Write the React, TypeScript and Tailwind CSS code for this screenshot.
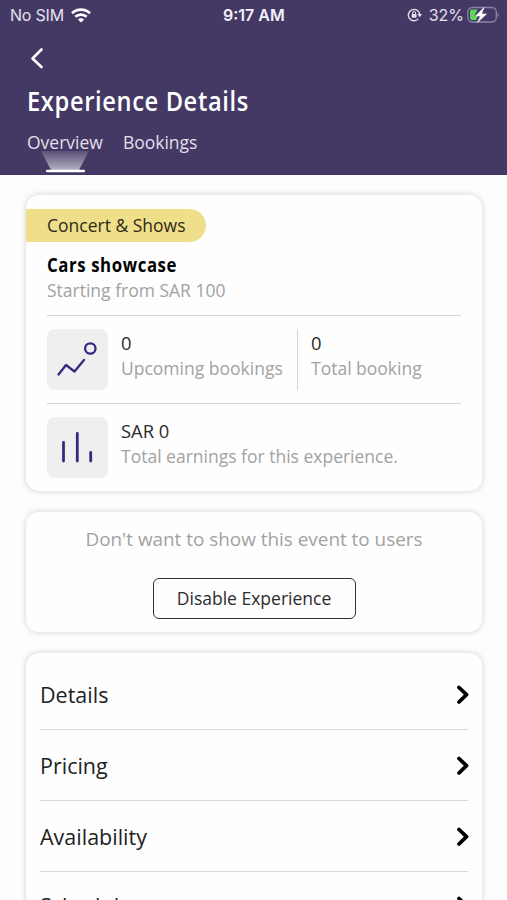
import { useState } from "react"

const sections = ["Details", "Pricing", "Availability", "Schedule"]

function StatusBar() {
  return (
    <div className="flex h-[30px] items-center pl-[10px] pr-[8px] font-['Inter',sans-serif] text-[16px] leading-[30px] text-[#e4e0ee]">
      <div className="flex w-[213px] items-center">
        <span className="tracking-[-0.2px]">No SIM</span>
        <svg className="ml-[7px]" width="20" height="15" viewBox="0 0 20 15" fill="none" stroke="white" strokeWidth="2.7">
          <path d="M1 5.2C6 .4 14 .4 19 5.2" />
          <path d="M4.3 8.8C7.5 5.8 12.5 5.8 15.7 8.8" />
          <path d="M10 14.6l-3.1-3.1c1.6-1.6 4.6-1.6 6.2 0z" fill="white" stroke="none" />
        </svg>
      </div>
      <span className="font-semibold text-[#f3f1f8]">9:17 AM</span>
      <div className="ml-auto flex items-center">
        <svg width="15" height="14" viewBox="0 0 15 14" fill="none">
          <path d="M12.7 6.2A5.7 5.7 0 1 0 11.3 10.9" stroke="#e4e0ee" strokeWidth="1.4" />
          <path d="M10.4 6H15l-2.3 3.2z" fill="#e4e0ee" />
          <path d="M5.6 6.4V5a1.5 1.5 0 0 1 3 0v1.4" stroke="#e4e0ee" />
          <rect x="4.7" y="6" width="4.8" height="3.8" rx=".6" fill="#e4e0ee" />
        </svg>
        <span className="ml-[7px]">32%</span>
        <svg className="ml-[3px]" width="32" height="18" viewBox="0 0 32 18">
          <rect x=".8" y="1.5" width="28.5" height="14.5" rx="4.5" fill="none" stroke="#8b82a3" strokeWidth="1.3" />
          <path d="M30.6 6.5c1.6.8 1.6 4.2 0 5z" fill="#8b82a3" />
          <path d="M5 3.6h5.5L7.5 10h3l-1.2 4H5a2 2 0 0 1-2-2V5.6a2 2 0 0 1 2-2z" fill="#5fd35f" />
          <path d="M17 1.5L8.500 10h5l-3 6.500L19.500 8h-5z" fill="white" stroke="white" strokeWidth=".6" />
        </svg>
      </div>
    </div>
  )
}

function TrendIcon() {
  return (
    <svg width="61" height="61" viewBox="0 0 61 61" fill="none" stroke="#3c2780" strokeWidth="2.3" strokeLinecap="round" strokeLinejoin="round">
      <path d="M11.5 45.5L19 36l8.5 6.5L37 31" />
      <circle cx="43.3" cy="19.5" r="5.2" />
    </svg>
  )
}

function BarsIcon() {
  return (
    <svg width="61" height="61" viewBox="0 0 61 61" stroke="#3c2780" strokeWidth="2.8" strokeLinecap="round">
      <path d="M16.5 25.5V44M30.3 16.5V44M43.7 35.5V44" />
    </svg>
  )
}

function Stat({ value, label }: { value: string; label: string }) {
  return (
    <div className="whitespace-nowrap">
      <p className="text-[18.4px] leading-[27px] text-[#2b2b2b]">{value}</p>
      <p className="text-[17.5px] leading-[25px] text-[#a2a2a2]">{label}</p>
    </div>
  )
}

export default function App() {
  const [tab, setTab] = useState("Overview")

  return (
    <div className="h-[900px] overflow-hidden bg-[#fdfdfd] font-['Open_Sans',sans-serif]">
      <header className="h-[175px] bg-[#443964]">
        <StatusBar />
        <button className="ml-[30px] mt-[17px] block h-[22px]">
          <svg width="14" height="22" viewBox="0 0 14 22" fill="none" stroke="white" strokeWidth="2.6" strokeLinecap="round" strokeLinejoin="round">
            <path d="M11.5 2.5l-9 9 9 8.5" />
          </svg>
        </button>
        <h1 className="ml-[27px] mt-[14px] w-max origin-left scale-x-[0.86] text-[27.5px] font-semibold leading-[36px] tracking-[0.75px] text-white">Experience Details</h1>
        <nav className="ml-[27px] mt-[10px] flex gap-[20px] text-[17.5px] leading-[26px]">
          {["Overview", "Bookings"].map((name) => (
            <button key={name} onClick={() => setTab(name)} className="relative text-[#e2dfea]">
              {name}
              {tab === name && (
                <svg className="absolute left-[14px] top-[22px]" width="48" height="22" viewBox="0 0 48 22">
                  <defs>
                    <linearGradient id="beam" x1="0" y1="0" x2="0" y2="1">
                      <stop offset="0" stopColor="white" stopOpacity="0.12" />
                      <stop offset="1" stopColor="white" stopOpacity="0.6" />
                    </linearGradient>
                  </defs>
                  <path d="M0 0h48L38 19H10z" fill="url(#beam)" />
                  <rect x="5" y="18.7" width="39" height="2.6" rx="1" fill="white" />
                </svg>
              )}
            </button>
          ))}
        </nav>
      </header>

      <main className="flex flex-col gap-[20px] pl-[26px] pr-[25px] pt-[20px]">
        <section className="h-[296px] rounded-[13px] bg-[#fefefe] pt-[14px] shadow-[0_0_6px_rgba(0,0,0,0.18)]">
          <div className="h-[33px] w-[180px] rounded-r-full bg-[#efdf8a] pl-[21px] text-[17.5px] leading-[32px] text-[#2f2a18]">Concert &amp; Shows</div>
          <div className="px-[21px]">
            <h2 className="mt-[10px] w-max origin-left scale-x-[0.84] text-[20px] font-bold leading-[26px] tracking-[0.7px] text-black">Cars showcase</h2>
            <p className="h-[38px] border-b border-[#d4d4d4] text-[17.5px] leading-[24px] text-[#a2a2a2]">Starting from SAR 100</p>
            <div className="flex h-[88px] border-b border-[#d4d4d4] pt-[13px]">
              <div className="mr-[13px] size-[61px] shrink-0 rounded-[8px] bg-[#efefef]"><TrendIcon /></div>
              <div className="h-[61px] w-[177px] shrink-0 border-r border-[#d4d4d4]">
                <Stat value="0" label="Upcoming bookings" />
              </div>
              <div className="ml-[13px]"><Stat value="0" label="Total booking" /></div>
            </div>
            <div className="flex pt-[13px]">
              <div className="mr-[13px] size-[61px] shrink-0 rounded-[8px] bg-[#efefef]"><BarsIcon /></div>
              <Stat value="SAR 0" label="Total earnings for this experience." />
            </div>
          </div>
        </section>

        <section className="mt-px flex h-[120px] flex-col items-center rounded-[13px] bg-[#fefefe] pt-[14px] shadow-[0_0_6px_rgba(0,0,0,0.18)]">
          <p className="text-[18.9px] leading-[26px] text-[#a2a2a2]">Don't want to show this event to users</p>
          <button className="mt-[26px] h-[41px] w-[203px] rounded-[6px] border-[1.5px] border-[#333] text-[17.5px] text-[#2b2b2b]">Disable Experience</button>
        </section>

        <section className="mt-px h-[400px] rounded-t-[13px] bg-[#fefefe] px-[14px] pt-[6px] shadow-[0_0_6px_rgba(0,0,0,0.18)]">
          {sections.map((name) => (
            <div key={name} className="flex h-[71px] items-center justify-between border-b border-[#d8d8d8] pt-[3px] text-[21.5px] text-[#222] last:h-[67px]">
              {name}
              <svg className="-mr-px -mt-[2px]" width="13" height="20" viewBox="0 0 13 20" fill="none" stroke="black" strokeWidth="3.8" strokeLinecap="round" strokeLinejoin="round">
                <path d="M3 2.5l7.5 7.2L3 17" />
              </svg>
            </div>
          ))}
        </section>
      </main>
    </div>
  )
}
